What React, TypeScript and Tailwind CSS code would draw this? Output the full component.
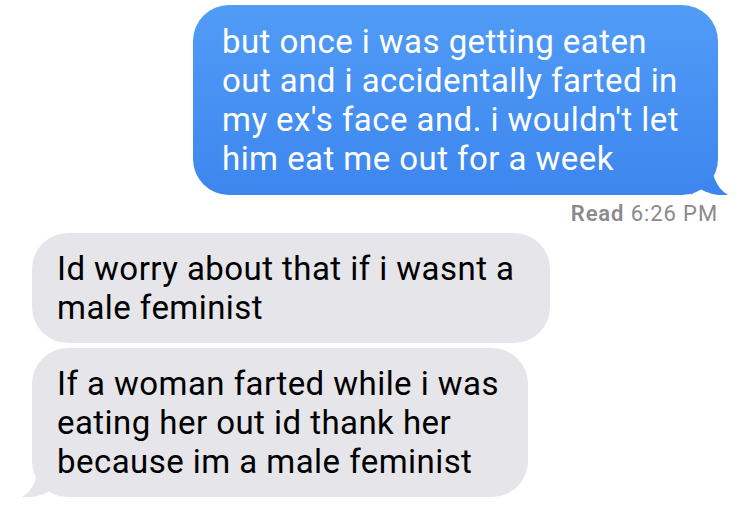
const font = { fontFamily: "Roboto, 'Liberation Sans', sans-serif" };

function SentBubble({ children }: { children: React.ReactNode }) {
  return (
    <div className="relative ml-[193px] w-[525px]">
      <div className="relative z-10 rounded-[36px] bg-gradient-to-b from-[#519cf6] to-[#3d86ef] pl-[29px] pr-[20px] pt-[17px] pb-[17px] text-[33px] leading-[39px] tracking-[0.45px] text-white">
        {children}
      </div>
      <svg className="absolute bottom-0 right-[-13px] z-0" width="40" height="40" viewBox="0 0 40 40">
        <path d="M0 0 L20 0 C20 18 24 32 37 40 C26 41 15 38 8 33 C5 36 2 38 0 40 Z" fill="#3d86ef" />
      </svg>
    </div>
  );
}

function ReceivedBubble({ children, width, tail }: { children: React.ReactNode; width: string; tail?: boolean }) {
  return (
    <div className={`relative ml-[32px] ${width}`}>
      <div className="relative z-10 rounded-[36px] bg-[#e5e5ea] pl-[25px] pr-[18px] py-[16px] text-[33px] leading-[39px] tracking-[0.45px] text-black">
        {children}
      </div>
      {tail && (
        <svg className="absolute bottom-0 left-[-13px] z-0" width="40" height="40" viewBox="0 0 40 40">
          <path d="M40 0 L20 0 C20 18 16 32 3 40 C14 41 25 38 32 33 C35 36 38 38 40 40 Z" fill="#e5e5ea" />
        </svg>
      )}
    </div>
  );
}

export default function App() {
  return (
    <div className="h-[516px] w-[750px] overflow-hidden bg-white pt-[5px]" style={font}>
      <SentBubble>
        but once i was getting eaten out and i accidentally farted in my ex's face and. i wouldn't let him eat me out for a week
      </SentBubble>
      <div className="mt-[5px] mr-[32px] text-right text-[22px] leading-[28px] tracking-[0.9px] text-[#8a8a8f]">
        <span className="font-semibold">Read</span> 6:26 PM
      </div>
      <div className="mt-[5px] flex flex-col gap-[5px]">
        <ReceivedBubble width="w-[518px]">Id worry about that if i wasnt a male feminist</ReceivedBubble>
        <ReceivedBubble width="w-[496px]" tail>
          If a woman farted while i was eating her out id thank her because im a male feminist
        </ReceivedBubble>
      </div>
    </div>
  );
}
